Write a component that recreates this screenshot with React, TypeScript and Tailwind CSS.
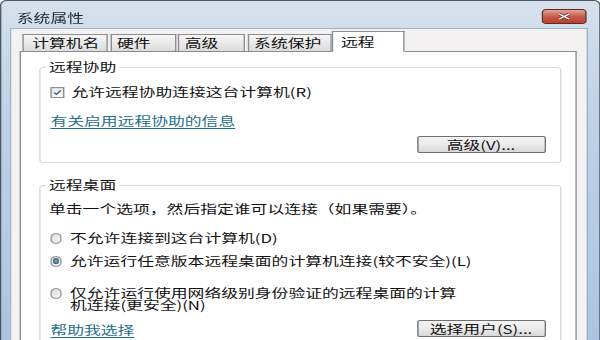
import React from 'react';

// The reference is a Win7 dialog stretched ~1.4x horizontally, so the window is
// laid out at its natural width and scaled on the x axis to fill 600px.

const Checkbox: React.FC = () => (
  <div className="w-[10px] h-[11px] border border-[#8e8f8f] bg-linear-to-b from-[#dcdcdc] to-[#f7f7f7] p-[1px] shrink-0">
    <div className="w-full h-full bg-linear-to-br from-[#e8eef5] to-white flex items-center justify-center">
      <svg width="7" height="7" viewBox="0 0 7 7">
        <path d="M0.8 3.6 L2.7 5.6 L6.3 1" stroke="#3c5b8d" strokeWidth="1.4" fill="none" />
      </svg>
    </div>
  </div>
);

const Radio: React.FC<{ checked?: boolean }> = ({ checked }) => (
  <div className="w-[8px] h-[11px] rounded-full border border-[#9a9a9a] bg-linear-to-br from-[#d8d8d8] to-[#fafafa] flex items-center justify-center shrink-0">
    {checked && <div className="w-[4px] h-[6px] rounded-full bg-radial from-[#7fb3d1] to-[#1c3a50]" />}
  </div>
);

const Button: React.FC<{ children: React.ReactNode }> = ({ children }) => (
  <div className="w-[92px] h-[17px] rounded-[2px] border border-[#707070] bg-linear-to-b from-[#f4f4f4] via-[#ebebeb] to-[#d8d8d8] flex items-center justify-center leading-[14px]">
    {children}
  </div>
);

export default function App() {
  return (
    <div className="w-[600px] h-[340px] overflow-hidden bg-white">
      <div className="w-[428.57px] h-[360px] origin-top-left scale-x-[1.4] flex flex-col border border-[#4d5866] rounded-t-[5px] bg-linear-to-b from-[#d6e1ec] via-[#bfd2e7] via-30% to-[#a9c4e2] font-['Noto_Sans_CJK_SC','Microsoft_YaHei',sans-serif] text-[12px] text-[#111]">
        {/* Title bar */}
        <div className="h-[27px] flex items-start justify-between pl-[11px] pr-[9px] shrink-0">
          <span className="mt-[10px] leading-[14px] text-[#1c2a3a]">系统属性</span>
          <div className="mt-[8px] w-[32px] h-[15px] rounded-[3px] border border-[#5e2a26] bg-linear-to-b from-[#e3a398] via-[#c8594b] to-[#b8402f] flex items-center justify-center">
            <svg width="10" height="7" viewBox="0 0 10 7">
              <path d="M1.5 1 L8.5 6 M8.5 1 L1.5 6" stroke="#5a2520" strokeWidth="2.6" />
              <path d="M1.5 1 L8.5 6 M8.5 1 L1.5 6" stroke="#ffffff" strokeWidth="1.5" />
            </svg>
          </div>
        </div>

        {/* Frame + body */}
        <div className="flex-1 flex pl-[6px] pr-[7.5px]">
          <div className="flex-1 flex flex-col bg-[#f3f1f1] border-l border-t border-r border-[#9fb3c8] pl-[6px] pr-[7.5px] pt-[2px]">
            {/* Tabs */}
            <div className="flex items-end h-[20px] pl-[2px] gap-[1.5px]">
              <div className="w-[61px] h-[17px] border border-b-0 border-[#8c8e94] bg-linear-to-b from-[#f6f6f6] to-[#dcdcdc] pl-[6px] leading-[15px]">计算机名</div>
              <div className="w-[47px] h-[17px] border border-b-0 border-[#8c8e94] bg-linear-to-b from-[#f6f6f6] to-[#dcdcdc] pl-[4px] leading-[15px]">硬件</div>
              <div className="w-[48px] h-[17px] border border-b-0 border-[#8c8e94] bg-linear-to-b from-[#f6f6f6] to-[#dcdcdc] pl-[4px] leading-[15px]">高级</div>
              <div className="w-[60px] h-[17px] border border-b-0 border-[#8c8e94] bg-linear-to-b from-[#f6f6f6] to-[#dcdcdc] pl-[4px] leading-[15px]">系统保护</div>
              <div className="relative z-10 -ml-[1.5px] -mb-[1px] w-[52px] h-[21px] border border-b-0 border-[#8c8e94] bg-white pl-[6px] pt-[3px] leading-[14px]">远程</div>
            </div>

            {/* Tab panel */}
            <div className="flex-1 bg-white border border-[#898c95] pl-[13px] pr-[10px] pt-[9px]">
              <fieldset className="border border-[#d5d9dd] rounded-[3px] px-0 pb-[9px]">
                <legend className="ml-[4px] px-[2px] leading-[12px]">远程协助</legend>
                <div className="mt-[12px] h-[14px] flex items-center pl-[7px] gap-[5px]">
                  <Checkbox />
                  <span className="leading-[14px]">允许远程协助连接这台计算机(R)</span>
                </div>
                <div className="mt-[15px] h-[14px] pl-[7px] leading-[14px]">
                  <span className="text-[#1f6f8c] underline underline-offset-2">有关启用远程协助的信息</span>
                </div>
                <div className="mt-[8px] flex justify-end pr-[10px]">
                  <Button>高级(V)...</Button>
                </div>
              </fieldset>

              <fieldset className="mt-[16px] border border-[#d5d9dd] rounded-[3px] px-0 pb-[20px]">
                <legend className="ml-[4px] px-[2px] leading-[12px]">远程桌面</legend>
                <div className="mt-[11px] h-[14px] pl-[6px] leading-[14px]">单击一个选项，然后指定谁可以连接（如果需要）。</div>
                <div className="mt-[15px] h-[14px] flex items-center pl-[7px] gap-[6px]">
                  <Radio />
                  <span className="leading-[14px]">不允许连接到这台计算机(D)</span>
                </div>
                <div className="mt-[9px] h-[14px] flex items-center pl-[7px] gap-[6px]">
                  <Radio checked />
                  <span className="leading-[14px]">允许运行任意版本远程桌面的计算机连接(较不安全)(L)</span>
                </div>
                <div className="mt-[19px] flex items-start pl-[7px] gap-[6px]">
                  <div className="mt-[1px]">
                    <Radio />
                  </div>
                  <span className="w-[282px] leading-[12px]">仅允许运行使用网络级别身份验证的远程桌面的计算机连接(更安全)(N)</span>
                </div>
                <div className="mt-[9px] flex items-end justify-between pl-[7px] pr-[10px]">
                  <span className="text-[#1f6f8c] underline underline-offset-2 leading-[14px]">帮助我选择</span>
                  <Button>选择用户(S)...</Button>
                </div>
              </fieldset>
            </div>
          </div>
        </div>
      </div>
    </div>
  );
}
